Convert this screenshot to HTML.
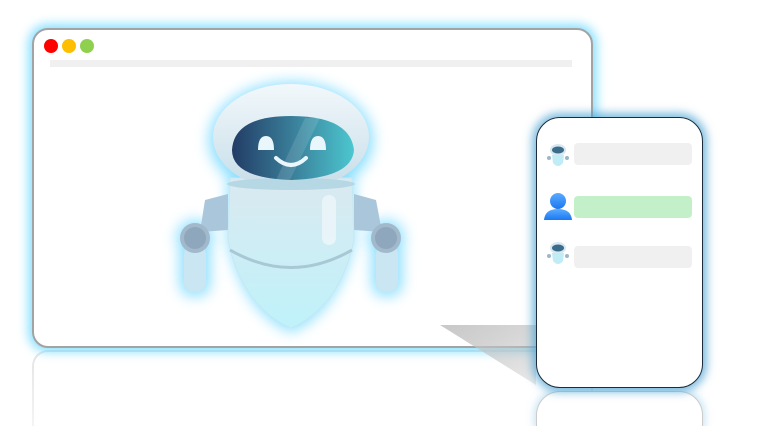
<!DOCTYPE html>
<html><head><meta charset="utf-8"><style>
html,body{margin:0;padding:0;background:#fff;width:772px;height:426px;overflow:hidden;position:relative;font-family:"Liberation Sans",sans-serif}
.win{position:absolute;left:32px;top:28px;width:557px;height:316px;border:2px solid #a3a3a3;border-radius:16px;background:#fff;box-shadow:0 0 10px 4px rgba(100,215,255,.75)}
.refl{position:absolute;left:32px;top:350px;width:557px;height:74px;border:2px solid #e4e4e4;border-bottom:none;border-radius:16px 16px 0 0;background:#fff;box-shadow:0 -4px 10px 2px rgba(120,215,255,.35);-webkit-mask-image:linear-gradient(#000,rgba(0,0,0,.4));mask-image:linear-gradient(#000,rgba(0,0,0,.4))}
.dot{position:absolute;top:9px;width:14px;height:14px;border-radius:50%}
.bar{position:absolute;left:16px;top:30px;width:522px;height:7px;background:#f0f0f0}
.phone{position:absolute;left:536px;top:117px;width:165px;height:269px;border:1.5px solid #1c2c3c;border-radius:24px;background:#fff;box-shadow:0 0 9px 4px rgba(70,160,210,.7)}
.prefl{position:absolute;left:536px;top:391px;width:165px;height:35px;border:1.5px solid #ccc;border-bottom:none;border-radius:24px 24px 0 0;background:#fff;box-shadow:0 0 8px 2px rgba(100,180,220,.35)}
.bub{position:absolute;left:37px;width:118px;height:22px;border-radius:4px;background:#f0f0f0}
.shadow{position:absolute;left:0;top:0}
</style></head><body>
<div class="refl"></div>
<div class="win">
<div class="dot" style="left:10px;background:#f00"></div>
<div class="dot" style="left:28px;background:#fdbf00"></div>
<div class="dot" style="left:46px;background:#8fd14f"></div>
<div class="bar"></div>
</div>
<svg class="shadow" width="772" height="426"><defs><linearGradient id="sh" x1="0" y1="0" x2="1" y2="1"><stop offset="0" stop-color="#c8c8c8"/><stop offset="1" stop-color="#bbb" stop-opacity=".3"/></linearGradient></defs>
<polygon points="440,325 536,325 536,385" fill="url(#sh)"/></svg>
<svg style="position:absolute;left:0;top:0" width="772" height="426">
<defs>
<filter id="gl" x="-30%" y="-30%" width="160%" height="160%"><feGaussianBlur stdDeviation="7"/></filter>
<linearGradient id="bd" x1="0" y1="0" x2="0" y2="1"><stop offset="0" stop-color="#dbe9f0"/><stop offset="1" stop-color="#bff2fa"/></linearGradient>
<linearGradient id="vs" x1="0" y1="0" x2="1" y2="0"><stop offset="0" stop-color="#223c66"/><stop offset=".5" stop-color="#3a7f9a"/><stop offset="1" stop-color="#4cc7cf"/></linearGradient>
<linearGradient id="hd" x1="0" y1="0" x2="0" y2="1"><stop offset="0" stop-color="#f2f8fb"/><stop offset="1" stop-color="#c6dde8"/></linearGradient>
</defs>
<g filter="url(#gl)" fill="#7fdcff" opacity=".9">
<ellipse cx="291" cy="140" rx="82" ry="58"/>
<path d="M228 180 L354 180 L354 240 Q340 310 291 332 Q242 310 228 240Z"/>
<circle cx="195" cy="238" r="18"/><rect x="180" y="240" width="30" height="56" rx="12"/>
<circle cx="386" cy="238" r="18"/><rect x="372" y="240" width="30" height="56" rx="12"/>
</g>
<rect x="184" y="244" width="22" height="48" rx="10" fill="#c9e6f2"/>
<rect x="376" y="244" width="22" height="48" rx="10" fill="#c9e6f2"/>
<path d="M205 200 L228 194 L228 230 L200 232Z" fill="#aac6da"/>
<path d="M376 200 L354 194 L354 230 L382 232Z" fill="#aac6da"/>
<circle cx="195" cy="238" r="15" fill="#a2b9cc"/><circle cx="195" cy="238" r="11" fill="#8ea7bc"/>
<circle cx="386" cy="238" r="15" fill="#a2b9cc"/><circle cx="386" cy="238" r="11" fill="#8ea7bc"/>
<path d="M230 178 L352 178 L354 240 Q340 306 291 328 Q242 306 228 240Z" fill="url(#bd)" stroke="#c7e7f2"/>
<path d="M230 250 Q291 285 352 250" fill="none" stroke="#a8c8d6" stroke-width="3"/>
<rect x="322" y="195" width="14" height="50" rx="7" fill="#eef6fa" opacity=".8"/>
<ellipse cx="291" cy="137" rx="78" ry="53" fill="url(#hd)"/>
<ellipse cx="291" cy="184" rx="64" ry="6" fill="#b6d7e4"/>
<path d="M232 150 Q234 116 291 116 Q350 116 354 150 Q352 178 291 180 Q232 178 232 150Z" fill="url(#vs)"/>
<path d="M305 118 L320 118 L290 180 L276 180Z" fill="#fff" opacity=".12"/>
<path d="M258 150 Q258 136 266 136 Q274 136 274 150Z" fill="#e9f6fb"/>
<path d="M310 150 Q310 136 318 136 Q326 136 326 150Z" fill="#e9f6fb"/>
<path d="M276 158 Q291 172 306 158" fill="none" stroke="#e9f6fb" stroke-width="4" stroke-linecap="round"/>
</svg>
<div class="prefl"></div>
<div class="phone">
<svg style="position:absolute;left:8px;top:24px" width="26" height="28" viewBox="0 0 26 28"><ellipse cx="13" cy="8" rx="8" ry="6" fill="#d8e8f0"/><ellipse cx="13" cy="8" rx="6" ry="3.5" fill="#3b6d8a"/><path d="M7 13 L19 13 L18 21 Q13 27 8 21Z" fill="#c0ecf5"/><circle cx="4" cy="16" r="2" fill="#9fb6c8"/><circle cx="22" cy="16" r="2" fill="#9fb6c8"/></svg>
<div class="bub" style="top:25px"></div>
<svg style="position:absolute;left:6px;top:74px" width="30" height="28" viewBox="0 0 30 28"><defs><linearGradient id="us" x1="0" y1="0" x2="0" y2="1"><stop offset="0" stop-color="#5aabff"/><stop offset="1" stop-color="#1a78f0"/></linearGradient></defs><circle cx="15" cy="9" r="8" fill="url(#us)"/><path d="M1 28 Q2 17 15 17 Q28 17 29 28Z" fill="url(#us)"/></svg>
<div class="bub" style="top:78px;background:#c3f0c8"></div>
<svg style="position:absolute;left:8px;top:122px" width="26" height="28" viewBox="0 0 26 28"><ellipse cx="13" cy="8" rx="8" ry="6" fill="#d8e8f0"/><ellipse cx="13" cy="8" rx="6" ry="3.5" fill="#3b6d8a"/><path d="M7 13 L19 13 L18 21 Q13 27 8 21Z" fill="#c0ecf5"/><circle cx="4" cy="16" r="2" fill="#9fb6c8"/><circle cx="22" cy="16" r="2" fill="#9fb6c8"/></svg>
<div class="bub" style="top:128px"></div>
</div>
</body></html>
